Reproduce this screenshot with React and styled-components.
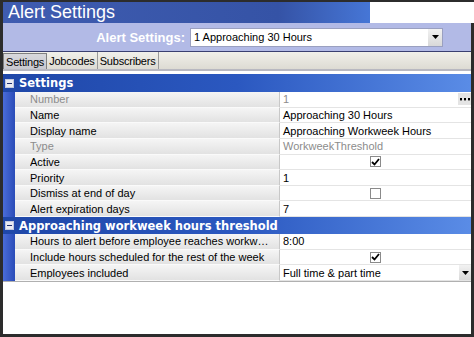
import React from "react";
import styled, { createGlobalStyle } from "styled-components";

const Global = createGlobalStyle`
  html, body { margin: 0; padding: 0; background: #fff; }
  * { box-sizing: border-box; }
`;

const Window = styled.div`
  width: 474px;
  height: 337px;
  background: #2c2c2c;
  padding: 2px 3px 3px 3px;
  display: flex;
  flex-direction: column;
  font-family: "Liberation Sans", Arial, sans-serif;
`;

const TitleRow = styled.div`
  display: flex;
  height: 21px;
  flex: none;
`;

const TitleBar = styled.div`
  width: 367px;
  background: linear-gradient(to right, #3f5cb0 0%, #3553a6 75%, #4676d6 100%);
  color: #fff;
  font-size: 18px;
  line-height: 21px;
  padding-left: 5px;
`;

const TitleBlank = styled.div`
  flex: 1;
  background: #fff;
  margin-right: -3px;
`;

const Band = styled.div`
  height: 29px;
  flex: none;
  background: #b2bae6;
  display: flex;
  align-items: center;
  justify-content: flex-end;
  padding-right: 28px;
  gap: 5px;
  border-bottom: 1px solid #3a4070;
`;

const BandLabel = styled.span`
  color: #fff;
  font-weight: bold;
  font-size: 13px;
`;

const Select = styled.div`
  width: 253px;
  height: 19px;
  background: #fff;
  border: 1px solid #9aa0c0;
  display: flex;
  align-items: center;
  font-size: 11px;
  padding-left: 3px;
  color: #000;
`;

const SelectText = styled.span`
  flex: 1;
`;

const DropButton = styled.span`
  width: ${(p) => p.$w || 14}px;
  height: 100%;
  background: linear-gradient(#f2f2f2, #d8d8d8);
  display: flex;
  align-items: center;
  justify-content: center;
`;

const Arrow = () => (
  <svg width="7" height="4" viewBox="0 0 7 4">
    <path d="M0 0h7L3.5 4z" fill="#000" />
  </svg>
);

const TabStrip = styled.div`
  height: 19px;
  flex: none;
  background: linear-gradient(#f1f0ea, #dddbd3);
  display: flex;
  align-items: stretch;
  border-bottom: 2px solid #b8b8c0;
`;

const Tab = styled.div`
  font-size: 11px;
  color: #000;
  display: flex;
  align-items: center;
  padding: 0 2px;
  letter-spacing: -0.2px;
  border-right: 1px solid #9a9a9a;
  ${(p) =>
    p.$active &&
    `background: linear-gradient(#d8d8dc, #c8c8d0);
     border: 1px solid #808080;
     border-bottom: none;
     margin-top: 1px;`}
`;

const Grid = styled.div`
  flex: 1;
  background: #fff;
  display: flex;
  flex-direction: column;
  padding-top: 3px;
`;

const Category = styled.div`
  height: ${(p) => p.$h}px;
  flex: none;
  display: flex;
  align-items: center;
  background: linear-gradient(to right, #1f47a8 0%, #2b58c0 50%, #5a8ce6 100%);
  color: #fff;
  font-family: "DejaVu Sans", Verdana, sans-serif;
  font-weight: bold;
  font-size: 11.5px;
`;

const Toggle = styled.span`
  width: 9px;
  height: 9px;
  margin: 0 5px 0 2px;
  background: #e8eaf2;
  border: 1px solid #c0c8e0;
  display: flex;
  align-items: center;
  justify-content: center;
  &::after {
    content: "";
    width: 5px;
    height: 1px;
    background: #203070;
  }
`;

const Row = styled.div`
  height: ${(p) => p.$h}px;
  flex: none;
  display: flex;
  font-size: 11px;
`;

const Gutter = styled.div`
  width: 12px;
  flex: none;
  background: linear-gradient(to right, #4a6cd8, #2a4cb8);
`;

const Label = styled.div`
  width: 265px;
  flex: none;
  background: linear-gradient(#f5f5f5, #e2e2e2);
  border-bottom: 1px solid #fafafa;
  border-right: 1px solid #c8c8c8;
  color: ${(p) => (p.$dim ? "#8c8c8c" : "#000")};
  padding-left: 15px;
  display: flex;
  align-items: center;
  white-space: nowrap;
  overflow: hidden;
`;

const LabelText = styled.span`
  overflow: hidden;
  text-overflow: ellipsis;
  white-space: nowrap;
  width: 244px;
`;

const Value = styled.div`
  flex: 1;
  background: #fff;
  border-bottom: 1px solid #e4e4e4;
  color: ${(p) => (p.$dim ? "#8c8c8c" : "#000")};
  padding-left: 3px;
  display: flex;
  align-items: center;
  justify-content: ${(p) => (p.$center ? "center" : "flex-start")};
`;

const ValueText = styled.span`
  flex: 1;
`;

const Check = styled.span`
  width: 11px;
  height: 11px;
  border: 1px solid #8a8a8a;
  background: #fff;
  display: flex;
  align-items: center;
  justify-content: center;
  margin-right: 3px;
`;

const Dots = styled.span`
  width: 13px;
  height: 12px;
  background: #e4e4e4;
  display: flex;
  align-items: center;
  justify-content: center;
`;

const DotsIcon = () => (
  <svg width="10" height="3" viewBox="0 0 10 3">
    <rect x="0" y="0" width="2" height="2.4" fill="#000" />
    <rect x="4" y="0" width="2" height="2.4" fill="#000" />
    <rect x="8" y="0" width="2" height="2.4" fill="#000" />
  </svg>
);

const Tick = () => (
  <svg width="9" height="8" viewBox="0 0 9 8">
    <path d="M1 4l2.5 2.5L8 1" stroke="#000" strokeWidth="1.8" fill="none" />
  </svg>
);

const Filler = styled.div`
  flex: 1;
  border-top: 1px solid #b0b0b0;
`;

const rows1 = [
  { label: "Number", value: "1", dim: true, dots: true },
  { label: "Name", value: "Approaching 30 Hours" },
  { label: "Display name", value: "Approaching Workweek Hours" },
  { label: "Type", value: "WorkweekThreshold", dim: true },
  { label: "Active", check: true, checked: true },
  { label: "Priority", value: "1" },
  { label: "Dismiss at end of day", check: true, checked: false },
  { label: "Alert expiration days", value: "7" },
];

const rows2 = [
  { label: "Hours to alert before employee reaches workweek hours", value: "8:00" },
  { label: "Include hours scheduled for the rest of the week", check: true, checked: true },
  { label: "Employees included", value: "Full time & part time", drop: true },
];

const PropRow = ({ r, h }) => (
  <Row $h={h}>
    <Gutter />
    <Label $dim={r.dim}>
      <LabelText>{r.label}</LabelText>
    </Label>
    {r.check ? (
      <Value $center>
        <Check>{r.checked && <Tick />}</Check>
      </Value>
    ) : (
      <Value $dim={r.dim}>
        <ValueText>{r.value}</ValueText>
        {r.dots && (
          <Dots>
            <DotsIcon />
          </Dots>
        )}
        {r.drop && (
          <DropButton $w={12}>
            <Arrow />
          </DropButton>
        )}
      </Value>
    )}
  </Row>
);

export default function App() {
  return (
    <>
      <Global />
      <Window>
        <TitleRow>
          <TitleBar>Alert Settings</TitleBar>
          <TitleBlank />
        </TitleRow>
        <Band>
          <BandLabel>Alert Settings:</BandLabel>
          <Select>
            <SelectText>1 Approaching 30 Hours</SelectText>
            <DropButton>
              <Arrow />
            </DropButton>
          </Select>
        </Band>
        <TabStrip>
          <Tab $active>Settings</Tab>
          <Tab>Jobcodes</Tab>
          <Tab>Subscribers</Tab>
        </TabStrip>
        <Grid>
          <Category $h={18}>
            <Toggle />
            Settings
          </Category>
          {rows1.map((r) => (
            <PropRow key={r.label} r={r} h={15.65} />
          ))}
          <Category $h={17}>
            <Toggle />
            Approaching workweek hours threshold
          </Category>
          {rows2.map((r) => (
            <PropRow key={r.label} r={r} h={15.65} />
          ))}
          <Filler />
        </Grid>
      </Window>
    </>
  );
}
